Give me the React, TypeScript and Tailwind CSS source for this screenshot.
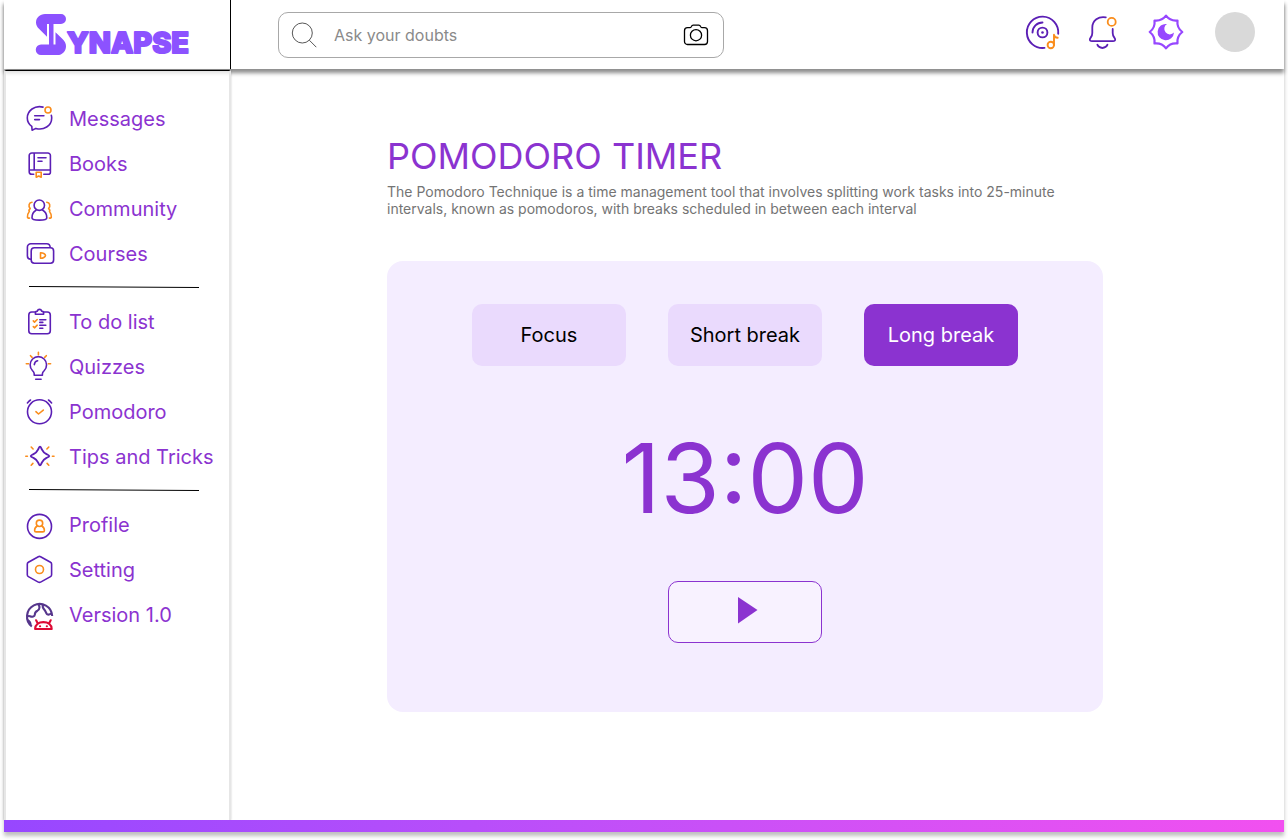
import { useState } from "react";
import type { ReactNode } from "react";

const PURPLE = "#5b1fb5";
const ORANGE = "#fa8d1c";

function Icon({ children }: { children: ReactNode }) {
  return (
    <svg
      aria-hidden="true"
      viewBox="0 -1 31 31"
      className="size-[31px] shrink-0 overflow-visible"
      fill="none"
      stroke={PURPLE}
      strokeWidth="1.6"
      strokeLinecap="round"
      strokeLinejoin="round"
    >
      {children}
    </svg>
  );
}

const MessagesIcon = () => (
  <Icon>
    <path d="M18 3.1C9.6 1.1 2.3 6.6 2.3 14c0 3.6 1.7 6.4 4.5 8.4l.3 3.8 3.8-1.8c7.6 2.2 15.8-2.4 15.800-10.400 0-1-.1-1.900-.4-2.800M9.700 11.800h9.200M9.700 15.600h4.800" />
    <circle cx="23" cy="6" r="3" stroke={ORANGE} />
  </Icon>
);

const BooksIcon = () => (
  <Icon>
    <path d="M8.700 25.300H6.800a2.600 2.600 0 0 1-2.600-2.600V6.600a2.600 2.600 0 0 1 2.600-2.600h16a2.600 2.600 0 0 1 2.600 2.600V21H4.400M25.400 21v2.300a2 2 0 0 1-2 2h-4.600M9.200 4v17M13 8.700h8M13 12.200h4" />
    <path d="M11.200 23.200h5v5l-2.500-1.200-2.500 1.200z" stroke={ORANGE} />
  </Icon>
);

const CommunityIcon = () => (
  <Icon>
    <circle cx="14.300" cy="11.200" r="5.200" />
    <path d="M11 16.300c-2.500 1.300-4 4.200-4 7.600 0 1.400 3.200 2.200 7.400 2.200s7.400-.8 7.400-2.200c0-3.400-1.500-6.300-4-7.600" />
    <path
      d="M7 8.200c-3 .2-4 4-1.800 6.300L3.900 16.200c1 1 .4 1.600-.3 2.500-.8.9-1.300 2.200-1.100 4.200 0 .7.800 1.200 2 1.200M21.800 8.200c3 .2 4 4 1.800 6.300l1.300 1.700c-1 1-.4 1.600.3 2.500.8.9 1.300 2.200 1.100 4.200 0 .7-.8 1.200-2 1.200"
      stroke={ORANGE}
    />
  </Icon>
);

const CoursesIcon = () => (
  <Icon>
    <rect x="6.2" y="8.7" width="22.4" height="15.6" rx="3.2" />
    <path d="M25.200 8.200C25 6 23.900 4.700 21.800 4.700H5.800a3.400 3.400 0 0 0-3.400 3.400v8.800c0 1.900 1.400 3.200 3.400 3.400" />
    <path d="M15.500 13.800v5.400c2.200.2 5-1.300 5-2.700s-2.800-2.900-5-2.700z" stroke={ORANGE} />
  </Icon>
);

const TodoIcon = () => (
  <Icon>
    <path d="M10.200 5H6.800a3 3 0 0 0-3 3v15.700a3 3 0 0 0 3 3h15.500a3 3 0 0 0 3-3V8a3 3 0 0 0-3-3h-3.500" />
    <path d="M10.400 7.300V6c0-1.300.8-1.900 2-1.900.2-1 1-1.700 2.100-1.700s1.900.7 2.100 1.700c1.200 0 2 .6 2 1.900v1.300zM14.800 12.700h6M14.800 15.400h3M14.800 18.300h6M14.800 21.200h3" />
    <path d="m8.300 13.900 1.200 1.200 2.700-2.600M8.300 19.600l1.200 1.200 2.700-2.600" stroke={ORANGE} />
  </Icon>
);

const QuizzesIcon = () => (
  <Icon>
    <path d="M9.200 23.300v-1.600c0-1.200-.8-2.200-1.800-3.200a8.200 8.200 0 1 1 11.900 0c-1 1-1.900 2-1.900 3.200v1.600zM10.700 27.200h5.400M9.300 12.700c.2-2 1.300-3.400 3.300-3.900" />
    <path
      d="M13.400.3v2.400M5.500 3.700l1.600 1.700M21.300 3.700l-1.600 1.700M1.300 11.800h2.300M23.300 11.800h2.300"
      stroke={ORANGE}
    />
  </Icon>
);

const PomodoroIcon = () => (
  <Icon>
    <circle cx="14.500" cy="14.800" r="12" />
    <path d="M2.400 6A17 17 0 0 1 5.500 3M26.600 6A17 17 0 0 0 23.500 3" />
    <path d="m10.900 14.700 2.600 2.300 4.800-3.900" stroke={ORANGE} />
  </Icon>
);

const TipsIcon = () => (
  <Icon>
    <path
      d="M15 4.600c.8 0 1.100 1.300 1.800 2.700 1.200 2.500 2.300 3.600 4.700 4.800 1.400.7 2.700 1.100 2.700 1.900s-1.300 1.200-2.700 1.900c-2.400 1.200-3.500 2.300-4.700 4.800-.7 1.400-1 2.700-1.800 2.700s-1.100-1.300-1.800-2.700c-1.200-2.500-2.300-3.600-4.700-4.800C7.100 15.200 5.800 14.800 5.800 14s1.300-1.200 2.700-1.900c2.400-1.200 3.500-2.300 4.700-4.800.7-1.400 1-2.700 1.800-2.700z"
      strokeWidth="1.900"
    />
    <path
      d="M.8 14.200h1.600M27.400 14.200h1.600M6.200 5l1.900 2M23.800 5l-1.900 2M6.200 23.200l1.700-1.800M23.800 23.200l-1.700-1.800"
      stroke={ORANGE}
    />
  </Icon>
);

const ProfileIcon = () => (
  <Icon>
    <circle cx="14.500" cy="16.400" r="12" />
    <g stroke={ORANGE}>
      <circle cx="14.500" cy="13.300" r="3.200" />
      <path d="M12 16.200c-1.500.8-2.400 2.300-2.400 4.200 0 1 .5 1.500 1.500 1.500h6.800c1 0 1.500-.5 1.500-1.500 0-1.900-.9-3.400-2.400-4.200" />
    </g>
  </Icon>
);

const SettingIcon = () => (
  <Icon>
    <path d="M13.300 1.700a2.400 2.400 0 0 1 2.300 0l9.900 5.500a2.200 2.200 0 0 1 1.100 1.900v10.600a2.200 2.200 0 0 1-1.100 1.900l-9.900 5.500a2.400 2.400 0 0 1-2.300 0l-9.900-5.500a2.200 2.200 0 0 1-1.100-1.900V9.100a2.200 2.200 0 0 1 1.100-1.900z" />
    <circle cx="14.500" cy="14.500" r="4" stroke={ORANGE} />
  </Icon>
);

const VersionIcon = () => (
  <Icon>
    <g stroke="#56368c" strokeWidth="2.100" strokeLinecap="butt">
      <path d="M6.800 26.500A12.600 12.600 0 1 1 27.200 16" />
      <path d="M13 3.900c2.100 2.600 1.900 5.500-.5 6.800-2.300 1-2.700 1.800-2.700 4-.1 1.900-2.600 2.500-4.800 1.500-1-.4-2-.3-3 .3M18 4.400c-.8 2.600-.1 4 1.300 5.200 1.600 1.400 1.200 3.300 2.700 4.500 1.500 1 3.200.4 4.700-1" />
      <path d="M2.800 20.300c1.600.7 2.700 2.200 2.800 4.800" />
    </g>
    <g stroke="#dd0a34" strokeWidth="2.100">
      <path d="M10.100 29c.2-4.300 3.600-6.900 8.300-6.900s8.100 2.600 8.300 6.900zM12.700 23.300l-1.600-3M24.100 23.300l1.600-3" />
      <path d="M15 26.200h.1M21.800 26.200h.1" />
    </g>
  </Icon>
);

type NavItem = { label: string; icon: () => ReactNode };

const groups: NavItem[][] = [
  [
    { label: "Messages", icon: MessagesIcon },
    { label: "Books", icon: BooksIcon },
    { label: "Community", icon: CommunityIcon },
    { label: "Courses", icon: CoursesIcon },
  ],
  [
    { label: "To do list", icon: TodoIcon },
    { label: "Quizzes", icon: QuizzesIcon },
    { label: "Pomodoro", icon: PomodoroIcon },
    { label: "Tips and Tricks", icon: TipsIcon },
  ],
  [
    { label: "Profile", icon: ProfileIcon },
    { label: "Setting", icon: SettingIcon },
    { label: "Version 1.0", icon: VersionIcon },
  ],
];

function Logo() {
  return (
    <a href="#home" aria-label="Synapse" className="text-[#8c52ff]">
      <svg
        aria-hidden="true"
        viewBox="0 0 170 41"
        className="h-[41px] w-[170px] overflow-visible"
        fill="currentColor"
      >
        <path d="M9 0h16a5 5 0 0 1 0 10h-7.500v20.500h2V18.300l7 6.700c2.400 2.300 3.500 4.500 3.500 7.200 0 5-3.700 8.800-8.500 8.800H5a5.200 5.200 0 0 1 0-10.500h8V10h-2v12.700L3.200 15C1 12.800 0 11 0 8.500 0 3.600 4 0 9 0z" />
        <path d="M13.300 9h3v22h-3z" />
        <text
          x="31"
          y="39"
          className="text-[29px] font-extrabold"
          stroke="currentColor"
          strokeWidth="2"
          strokeLinejoin="round"
        >
          YNAPSE
        </text>
      </svg>
    </a>
  );
}

function Header() {
  return (
    <header className="flex h-[69px] items-stretch shadow-[0_4px_4px_rgba(0,0,0,0.45)]">
      <div className="flex w-[227px] shrink-0 items-center border-r border-black pl-8">
        <Logo />
      </div>
      <div className="flex min-w-0 flex-1 items-start justify-between pt-3 pr-[29px] pl-[47px]">
        <form
          role="search"
          onSubmit={(e) => e.preventDefault()}
          className="flex h-[46px] w-full max-w-[446px] items-center rounded-[10px] border border-[#a8a8a8] pr-3.5 pl-3"
        >
          <svg
            aria-hidden="true"
            viewBox="0 0 26 26"
            className="size-[26px] shrink-0"
            fill="none"
            stroke="#444"
            strokeWidth="0.9"
          >
            <circle cx="11.300" cy="11" r="10" />
            <path d="m18.300 18.200 7 7" />
          </svg>
          <input
            aria-label="Ask your doubts"
            placeholder="Ask your doubts"
            className="ml-[17px] min-w-0 flex-1 bg-transparent text-base text-black outline-none placeholder:text-[#8a8a8a]"
          />
          <button type="button" aria-label="Search by image" className="shrink-0">
            <svg
              aria-hidden="true"
              viewBox="0 0 26 26"
              className="size-[26px]"
              fill="none"
              stroke="#000"
              strokeWidth="1.300"
              strokeLinejoin="round"
            >
              <path d="M4.500 5.700h2.300c.8 0 1.200-.4 1.600-1.200.4-.9.900-1.300 1.800-1.300h5.600c.9 0 1.400.4 1.800 1.300.4.8.8 1.200 1.600 1.200h2.300a3 3 0 0 1 3 3v10.800a3 3 0 0 1-3 3h-17a3 3 0 0 1-3-3V8.700a3 3 0 0 1 3-3z" />
              <circle cx="13" cy="13.200" r="5.600" />
            </svg>
          </button>
        </form>
        <div className="flex shrink-0 items-center gap-7">
          <button type="button" aria-label="Music">
            <svg
              aria-hidden="true"
              viewBox="0 0 34 34"
              className="size-[34px] overflow-visible"
              fill="none"
              stroke={PURPLE}
              strokeWidth="1.900"
              strokeLinecap="round"
              strokeLinejoin="round"
            >
              <path d="M33.200 18.700A15.700 15.700 0 1 0 19.500 32.900" />
              <circle cx="17.500" cy="17.500" r="4.900" />
              <path d="M7.500 17.500a10 10 0 0 1 10-10" />
              <circle cx="17.500" cy="17.500" r="1.300" fill={PURPLE} stroke="none" />
              <g stroke={ORANGE}>
                <circle cx="25.800" cy="30" r="3.200" />
                <path d="M29 30V19.800c.3 1.900 1.500 2.900 3.700 2.900" />
              </g>
            </svg>
          </button>
          <button type="button" aria-label="Notifications">
            <svg
              aria-hidden="true"
              viewBox="0 0 32 32"
              className="size-8 overflow-visible"
              fill="none"
              stroke={PURPLE}
              strokeWidth="1.800"
              strokeLinecap="round"
              strokeLinejoin="round"
            >
              <path d="M18.800 1.300C11.500-.1 5.300 4.600 5.300 11.500v5.600c0 1.700-.5 3-1.500 4.300-1.700 2.200-1.200 3.800 1 3.800h21.400c2.200 0 2.700-1.600 1-3.800-1-1.300-1.500-2.600-1.500-4.300v-4.200M10.300 28.700c2 4.400 8.200 4.400 10.200 0" />
              <circle cx="24.700" cy="5.900" r="4" stroke={ORANGE} />
            </svg>
          </button>
          <button type="button" aria-label="Toggle dark mode">
            <svg aria-hidden="true" viewBox="0 0 40 40" className="size-10" fill="none">
              <g transform="translate(19 20)">
                <path
                  d="M0-16.300Q4.400-10.600 11.500-11.500 10.600-4.400 16.300 0 10.600 4.400 11.500 11.500 4.400 10.600 0 16.300-4.400 10.600-11.500 11.500-10.600 4.400-16.300 0-10.600-4.400-11.500-11.500-4.400-10.600 0-16.300z"
                  stroke="#9747ff"
                  strokeWidth="2.200"
                  strokeLinejoin="round"
                />
              </g>
              <path d="M20 12A8.200 8.200 0 1 0 27 20.600 5.600 5.600 0 1 1 20 12z" fill="#9747ff" />
            </svg>
          </button>
          <button type="button" aria-label="Account" className="size-10 rounded-full bg-[#d9d9d9]" />
        </div>
      </div>
    </header>
  );
}

function Sidebar() {
  return (
    <aside className="relative mt-px w-[227px] shrink-0 border-x-2 border-t border-x-[#e6e6e6] border-t-black bg-white/70 shadow-[0_0_2px_rgba(0,0,0,0.2)]">
      <nav aria-label="Main" className="pt-[25px] pl-[19px]">
        {groups.map((group, index) => (
          <div key={group[0].label}>
            {index > 0 && (
              <svg aria-hidden="true" viewBox="0 0 170 23" className="ml-1 h-[23px] w-[170px]">
                <path d="M0 10.500 170 11.500" stroke="#000" strokeWidth="1" />
              </svg>
            )}
            <ul>
              {group.map(({ label, icon: ItemIcon }) => (
                <li key={label}>
                  <a
                    href={`#${label.toLowerCase().replace(/ /g, "-")}`}
                    className="flex h-[45px] items-center gap-[13px] text-xl whitespace-nowrap text-[#8b33d0]"
                  >
                    <ItemIcon />
                    {label}
                  </a>
                </li>
              ))}
            </ul>
          </div>
        ))}
      </nav>
    </aside>
  );
}

const modes = [
  { label: "Focus", time: "25:00" },
  { label: "Short break", time: "05:00" },
  { label: "Long break", time: "13:00" },
];

function Timer() {
  const [active, setActive] = useState(2);
  return (
    <section
      aria-label="Timer"
      className="mt-11 flex flex-col items-center rounded-2xl bg-[#f4edff] px-[85px] pt-[43px] pb-[69px]"
    >
      <div className="grid w-full grid-cols-3 gap-[42px]">
        {modes.map((mode, index) => (
          <button
            key={mode.label}
            type="button"
            aria-pressed={index === active}
            onClick={() => setActive(index)}
            className={
              index === active
                ? "h-[62px] rounded-[10px] bg-[#8b33d0] text-xl text-white"
                : "h-[62px] rounded-[10px] bg-[#eadafd] text-xl text-black"
            }
          >
            {mode.label}
          </button>
        ))}
      </div>
      <p className="mt-[54px] text-8xl leading-[116px] text-[#8b33d0]">{modes[active].time}</p>
      <button
        type="button"
        aria-label="Start"
        className="mt-[45px] flex h-[62px] w-[154px] items-center justify-center rounded-[10px] border border-[#8b33d0] bg-[#f8f2ff]"
      >
        <svg aria-hidden="true" viewBox="0 0 26 32" className="h-8 w-[26px]" fill="#8b33d0">
          <path d="M6 1v26.500L25.500 14z" />
        </svg>
      </button>
    </section>
  );
}

export default function App() {
  return (
    <div className="flex min-h-screen flex-col bg-white px-1 pb-2 font-['Inter',sans-serif]">
      <div className="flex flex-1 flex-col shadow-[0_4px_4px_rgba(0,0,0,0.25)]">
        <Header />
        <div className="flex flex-1">
          <Sidebar />
          <main className="min-w-0 flex-1 pt-[65px] pr-[181px] pb-16 pl-[156px]">
            <h1 className="text-4xl leading-[44px] text-[#8b33d0]">POMODORO TIMER</h1>
            <p className="mt-[5px] text-sm leading-[17px] text-[#747474]">
              The Pomodoro Technique is a time management tool that involves splitting work tasks into 25-minute
              intervals, known as pomodoros, with breaks scheduled in between each interval
            </p>
            <Timer />
          </main>
        </div>
        <div className="relative h-3 bg-linear-to-r from-[#9747ff] to-[#f250f0]" />
      </div>
    </div>
  );
}
